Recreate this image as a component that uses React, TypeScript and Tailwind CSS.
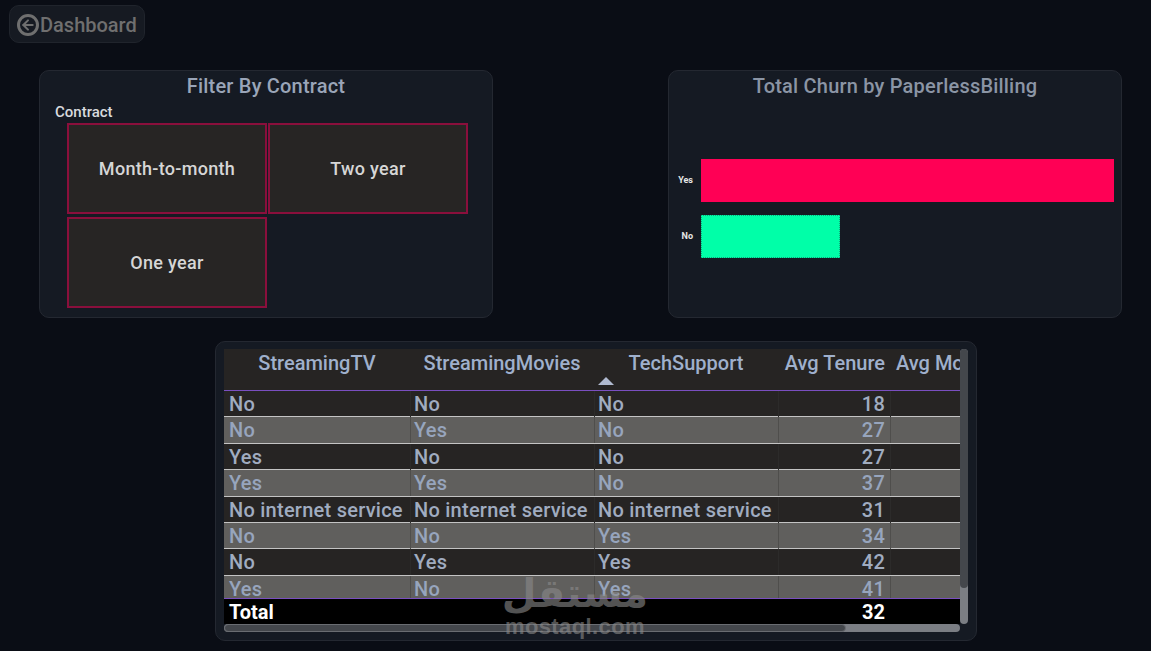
import { ArrowLeft } from "lucide-react";

const font = { fontFamily: "Roboto, 'Noto Sans', sans-serif" };

const rows = [
  ["No", "No", "No", "18"],
  ["No", "Yes", "No", "27"],
  ["Yes", "No", "No", "27"],
  ["Yes", "Yes", "No", "37"],
  ["No internet service", "No internet service", "No internet service", "31"],
  ["No", "No", "Yes", "34"],
  ["No", "Yes", "Yes", "42"],
  ["Yes", "No", "Yes", "41"],
];

const colClass = "grid grid-cols-[186px_184px_184px_112px_70px]";

function Tile({ label }: { label: string }) {
  return (
    <div className="flex h-[91px] w-[200px] items-center justify-center border-2 border-[#8a0f3c] bg-[#272524] text-[18px] font-medium tracking-[0.3px] text-[#d6d6d6]">
      {label}
    </div>
  );
}

export default function App() {
  return (
    <div
      className="relative h-[651px] w-[1151px] overflow-hidden bg-[#0a0d15] pl-[9px] pt-[5px]"
      style={font}
    >
      {/* back button */}
      <button className="flex h-[38px] w-[136px] items-center rounded-[10px] border border-[#20242c] bg-[#161a22] pl-[7px] pt-[2px] text-[20px] font-medium text-[#6f6f6f]">
        <span className="mr-[1px] flex h-[22px] w-[22px] shrink-0 items-center justify-center rounded-full border-[3px] border-[#6f6f6f]">
          <ArrowLeft className="h-[16px] w-[16px]" strokeWidth={3} />
        </span>
        Dashboard
      </button>

      <div className="ml-[30px] mr-[29px] mt-[27px] flex justify-between">
        {/* slicer */}
        <section className="h-[248px] w-[454px] rounded-[10px] border border-[#242831] bg-[#151a23]">
          <h2 className="pt-[2px] text-center text-[20px] font-medium leading-[26px] tracking-[0.2px] text-[#9aa5b8]">
            Filter By Contract
          </h2>
          <p className="ml-[15px] mt-[3px] text-[15px] font-medium leading-[20px] text-[#d8dade]">Contract</p>
          <div className="ml-[27px] mt-[1px] grid w-[401px] grid-cols-[200px_200px] gap-x-[1px] gap-y-[3px]">
            <Tile label="Month-to-month" />
            <Tile label="Two year" />
            <Tile label="One year" />
          </div>
        </section>

        {/* bar chart */}
        <section className="h-[248px] w-[454px] rounded-[10px] border border-[#242831] bg-[#151a23]">
          <h2 className="pt-[2px] text-center text-[20px] font-medium leading-[26px] tracking-[0.2px] text-[#8b95a5]">
            Total Churn by PaperlessBilling
          </h2>
          <div className="mt-[60px] flex flex-col gap-[13px] pl-[5px]">
            <div className="flex items-center gap-[8px]">
              <span className="w-[19px] text-right text-[9px] font-bold text-[#e6e6e6]">Yes</span>
              <div className="h-[43px] w-[413px] bg-[#ff0055]" />
            </div>
            <div className="flex items-center gap-[8px]">
              <span className="w-[19px] text-right text-[9px] font-bold text-[#e6e6e6]">No</span>
              <div className="h-[43px] w-[139px] border border-dotted border-[#0aa87a] bg-[#00ffa8]" />
            </div>
          </div>
        </section>
      </div>

      {/* table */}
      <section className="ml-[206px] mt-[23px] flex h-[300px] w-[762px] rounded-[10px] border border-[#242831] bg-[#151a23] pl-[8px] pt-[7px]">
        <div className="w-[736px]">
          <div className="h-[275px] w-[736px] overflow-hidden">
            <div className={`${colClass} h-[42px] border-b border-[#7a4fc0] bg-[#262423] text-[20px] font-medium leading-[26px] text-[#9fb0cc]`}>
              <div className="truncate pt-[1px] text-center">StreamingTV</div>
              <div className="truncate pt-[1px] text-center">StreamingMovies</div>
              <div className="relative pt-[1px] text-center">
                TechSupport
                <span className="absolute left-[4px] top-[28px] h-0 w-0 border-x-[8px] border-b-[8px] border-x-transparent border-b-[#b0bad0]" />
              </div>
              <div className="pr-[5px] pt-[1px] text-right">Avg Tenure</div>
              <div className="overflow-hidden whitespace-nowrap pl-[6px] pt-[1px]">Avg Monthly</div>
            </div>
            <div className="h-[207px] overflow-hidden">
              {rows.map((r, i) => {
                const dark = i % 2 === 0;
                const divider = dark ? "border-l border-[#2c2b2a]" : "border-l border-[#4f4e4c]";
                return (
                  <div
                    key={i}
                    className={`${colClass} h-[26.4px] border-b border-[#c4c4c4] text-[20px] font-medium leading-[26px] tracking-[0.25px] ${
                      dark ? "bg-[#262423] text-[#a0acc0]" : "bg-[#605f5d] text-[#97a5bd]"
                    }`}
                  >
                    <div className="whitespace-nowrap pl-[5px]">{r[0]}</div>
                    <div className={`whitespace-nowrap pl-[3px] ${divider}`}>{r[1]}</div>
                    <div className={`whitespace-nowrap pl-[3px] ${divider}`}>{r[2]}</div>
                    <div className={`pr-[5px] text-right ${divider}`}>{r[3]}</div>
                    <div className={divider} />
                  </div>
                );
              })}
            </div>
            <div className={`${colClass} h-[26px] border-t border-[#7a4fc0] bg-black text-[20px] font-bold leading-[27px] text-white`}>
              <div className="pl-[5px]">Total</div>
              <div />
              <div />
              <div className="pr-[5px] text-right">32</div>
              <div />
            </div>
          </div>
          {/* horizontal scrollbar */}
          <div className="h-[8px] w-[736px] rounded-full bg-[#7b7e84]">
            <div className="h-[8px] w-[622px] rounded-full border border-[#6a6d72] bg-[#44474c]" />
          </div>
        </div>
        {/* vertical scrollbar */}
        <div className="h-[275px] w-[8px] rounded-full bg-[#7b7e84]">
          <div className="h-[239px] w-[8px] rounded-full bg-[#44474c]" />
        </div>
      </section>

      {/* watermark */}
      <div className="pointer-events-none absolute left-[500px] top-[570px] flex w-[150px] flex-col items-center text-[#8a8a8a] opacity-60">
        <span
          className="text-[40px] font-bold leading-[46px]"
          style={{ fontFamily: "'DejaVu Sans', sans-serif" }}
          dir="rtl"
        >
          مستقل
        </span>
        <span className="text-[22px] font-bold leading-[22px] tracking-[0.4px]" style={{ fontFamily: "'Liberation Sans', sans-serif" }}>
          mostaql.com
        </span>
      </div>
    </div>
  );
}
